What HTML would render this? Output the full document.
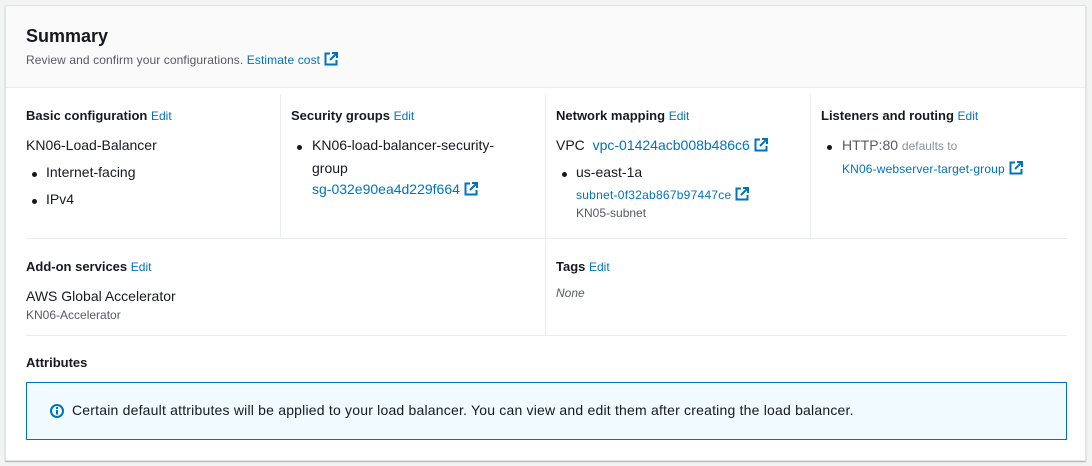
<!DOCTYPE html>
<html><head><style>
*{margin:0;padding:0;box-sizing:border-box}
body{width:1092px;height:466px;background:#f2f3f3;font-family:"Liberation Sans",Arial,sans-serif;color:#16191f;position:relative;overflow:hidden;font-size:14px}
.card{position:absolute;left:5px;top:5px;width:1081px;height:456px;background:#fff;border:1px solid #e1e4e4;box-shadow:0 1px 1px rgba(0,28,36,.3)}
.hdr{position:absolute;left:0;top:0;right:0;height:82px;background:#fafafa;border-bottom:1px solid #eaeded}
.a{position:absolute;white-space:nowrap}
h2{font-size:18px;font-weight:bold}
.sub{font-size:12px;color:#545b64;letter-spacing:.1px}
a,.l{color:#0073bb;text-decoration:none}
.t{font-size:13px;font-weight:bold}
.e{font-size:12px;font-weight:normal;color:#0073bb}
.s{font-size:12px;color:#545b64}
.sm{font-size:12px;letter-spacing:.25px}
.vl{position:absolute;width:1px;background:#eaeded}
.hl{position:absolute;height:1px;background:#eaeded}
.dot{position:absolute;width:5px;height:5px;border-radius:50%;background:#16191f}
.ext{display:inline-block;vertical-align:-2px;margin-left:4px}
</style></head><body>
<svg width="0" height="0" style="position:absolute"><defs><symbol id="x" viewBox="0 0 14 14"><path d="M6 1.5H1.5v11h11V8" fill="none" stroke="#0073bb" stroke-width="2"/><path d="M8 1h5v5M13 1L6 8" fill="none" stroke="#0073bb" stroke-width="2"/></symbol></defs></svg>
<div class="card">
<div class="hdr"></div>
<h2 class="a" style="left:20px;top:20px">Summary</h2>
<div class="a sub" style="left:20px;top:46px">Review and confirm your configurations. <span class="l">Estimate cost</span><svg class="ext" width="14" height="14"><use href="#x"/></svg></div>

<div class="vl" style="left:274px;top:88px;height:144px"></div>
<div class="vl" style="left:539px;top:88px;height:144px"></div>
<div class="vl" style="left:804px;top:88px;height:144px"></div>
<div class="hl" style="left:20px;top:232px;width:1041px"></div>
<div class="vl" style="left:539px;top:236px;height:94px"></div>
<div class="hl" style="left:20px;top:329px;width:1041px"></div>

<div class="a t" style="left:20px;top:102px">Basic configuration <span class="e">Edit</span></div>
<div class="a" style="left:20px;top:131px">KN06-Load-Balancer</div>
<div class="dot" style="left:26px;top:166px"></div><div class="a" style="left:40px;top:158px">Internet-facing</div>
<div class="dot" style="left:26px;top:193px"></div><div class="a" style="left:40px;top:185px">IPv4</div>

<div class="a t" style="left:285px;top:102px">Security groups <span class="e">Edit</span></div>
<div class="dot" style="left:291px;top:139px"></div><div class="a" style="left:306px;top:131px">KN06-load-balancer-security-</div>
<div class="a" style="left:306px;top:154px">group</div>
<div class="a l" style="left:306px;top:175px">sg-032e90ea4d229f664<svg class="ext" width="14" height="14"><use href="#x"/></svg></div>

<div class="a t" style="left:550px;top:102px">Network mapping <span class="e">Edit</span></div>
<div class="a" style="left:550px;top:131px">VPC&nbsp;&nbsp;<span class="l">vpc-01424acb008b486c6</span><svg class="ext" width="14" height="14"><use href="#x"/></svg></div>
<div class="dot" style="left:556px;top:166px"></div><div class="a" style="left:570px;top:158px">us-east-1a</div>
<div class="a l sm" style="left:570px;top:181px">subnet-0f32ab867b97447ce<svg class="ext" width="14" height="14"><use href="#x"/></svg></div>
<div class="a s" style="left:570px;top:200px">KN05-subnet</div>

<div class="a t" style="left:815px;top:102px">Listeners and routing <span class="e">Edit</span></div>
<div class="dot" style="left:821px;top:139px"></div><div class="a" style="left:836px;top:131px;color:#545b64">HTTP:80 <span style="font-size:12px;color:#879596">defaults to</span></div>
<div class="a l sm" style="left:836px;top:155px;letter-spacing:.15px">KN06-webserver-target-group<svg class="ext" width="14" height="14"><use href="#x"/></svg></div>

<div class="a t" style="left:20px;top:253px">Add-on services <span class="e">Edit</span></div>
<div class="a" style="left:20px;top:282px">AWS Global Accelerator</div>
<div class="a s" style="left:20px;top:302px">KN06-Accelerator</div>

<div class="a t" style="left:550px;top:253px">Tags <span class="e">Edit</span></div>
<div class="a s" style="left:550px;top:280px;font-style:italic">None</div>

<div class="a t" style="left:20px;top:349px">Attributes</div>
<div class="a" style="left:20px;top:376px;width:1041px;height:58px;background:#f1faff;border:1px solid #0073bb"></div>
<svg class="a" style="left:44px;top:398px" width="14" height="14" viewBox="0 0 14 14"><circle cx="7" cy="7" r="6" fill="none" stroke="#0073bb" stroke-width="2"/><rect x="6" y="6" width="2" height="4.5" fill="#0073bb"/><rect x="6" y="3" width="2" height="2" fill="#0073bb"/></svg>
<div class="a" style="left:66px;top:396px;font-size:14px;letter-spacing:.2px">Certain default attributes will be applied to your load balancer. You can view and edit them after creating the load balancer.</div>
</div>
</body></html>
